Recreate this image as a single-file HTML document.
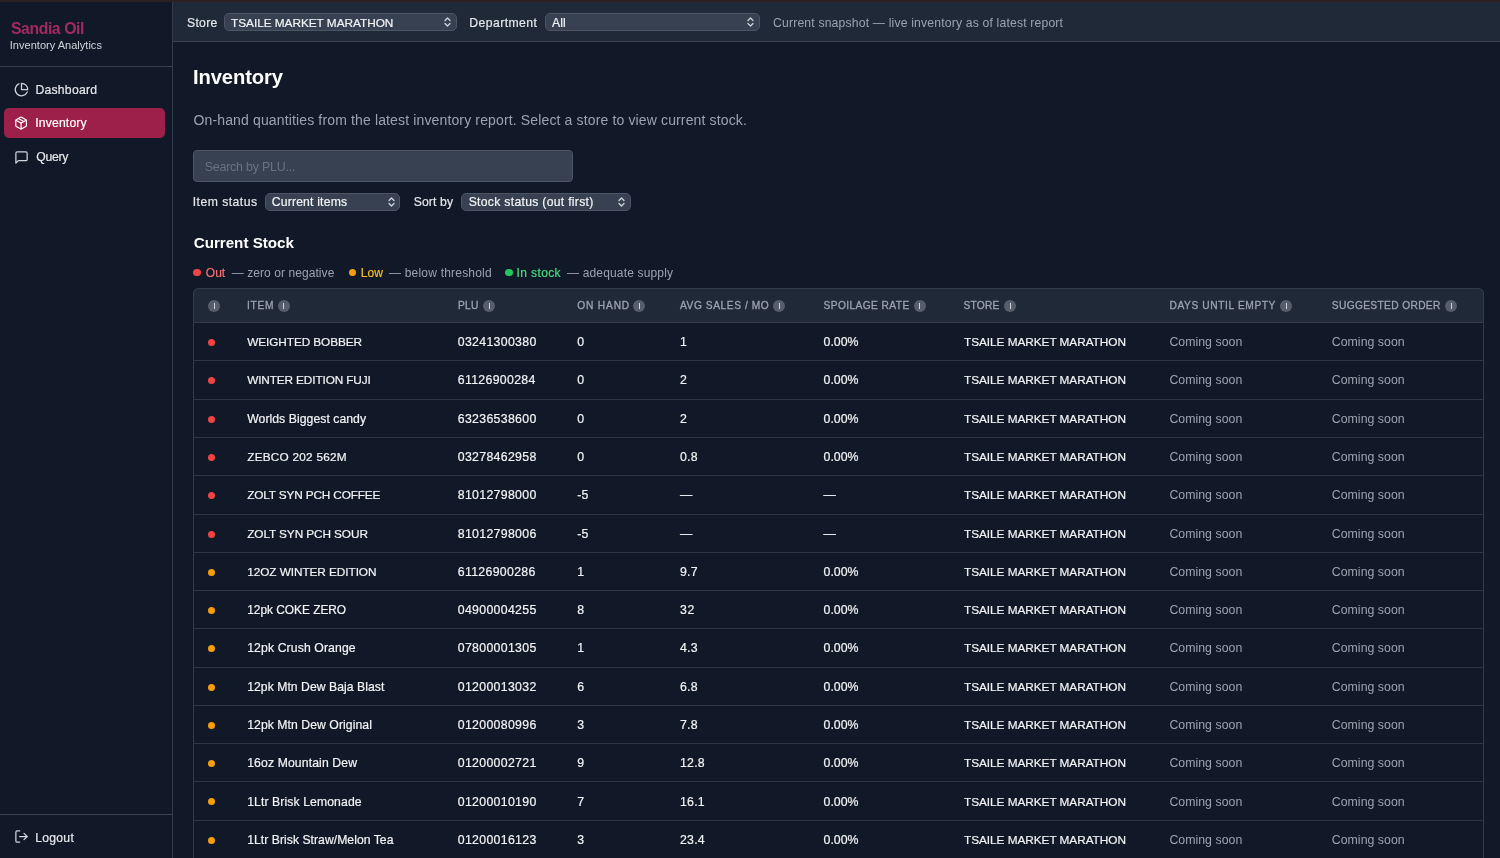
<!DOCTYPE html>
<html><head><meta charset="utf-8">
<style>
*{box-sizing:border-box;margin:0;padding:0}
html,body{width:1500px;height:858px;overflow:hidden;background:#111827;font-family:"Liberation Sans",sans-serif;color:#f3f4f6}
#wrap{position:absolute;left:0;top:0;width:1500px;height:858px;will-change:transform;background:#111827}
.a{position:absolute;line-height:1;white-space:nowrap}
#strip{position:absolute;left:0;top:0;width:1500px;height:2px;background:#2b2124}
#side{position:absolute;left:0;top:2px;width:173px;height:856px;background:#111827;border-right:1px solid #333c4a}
#brandline{position:absolute;left:0;top:64px;width:172px;height:1px;background:#374151}
.navbg{position:absolute;left:4px;top:105.5px;width:161px;height:30.5px;border-radius:5px;background:#9c2049}
.ico{position:absolute;width:15px;height:15px}
#logoutline{position:absolute;left:0;top:812px;width:172px;height:1px;background:#374151}
#top{position:absolute;left:173px;top:2px;width:1327px;height:40px;background:#1f2937;border-bottom:1px solid #374151}
.sel{position:absolute;height:18px;border:1px solid #4b5563;background:#374151;border-radius:5px}
.chev{position:absolute;width:7px;height:10px}
#search{position:absolute;left:193px;top:149.5px;width:380px;height:32.5px;background:#374151;border:1px solid #4b5563;border-radius:4px}
.tbl{position:absolute;left:193px;top:288px;width:1291px;height:600px;border:1px solid #323b49;border-radius:6px;overflow:hidden}
.thead{position:absolute;left:193px;top:288px;width:1291px;height:35px;background:#1f2937;border:1px solid #323b49;border-bottom:1px solid #343d4b;border-radius:6px 6px 0 0}
.info{position:absolute;width:12px;height:12px;border-radius:50%;background:#565e6b}
.info::after{content:"";position:absolute;left:5.5px;top:3px;width:1px;height:6px;background:#d1d5db}
.hr{position:absolute;left:194px;width:1289px;height:1px;background:#2b3544}
.dot{position:absolute;left:208px;width:7px;height:7px;border-radius:50%}
.ld{position:absolute;width:7.5px;height:7.5px;border-radius:50%;top:268.8px}
</style></head><body><div id="wrap">
<div id="strip"></div>
<div id="side">
  <div id="brandline"></div>
  <div class="navbg"></div>
  <div id="logoutline"></div>
</div>
<svg class="ico" style="left:14px;top:81.5px" viewBox="0 0 24 24" fill="none" stroke="#d1d5db" stroke-width="2" stroke-linecap="round" stroke-linejoin="round"><path d="M21.21 15.89A10 10 0 1 1 8 2.83"/><path d="M22 12A10 10 0 0 0 12 2v10z"/></svg>
<svg class="ico" style="left:14px;top:115.6px;width:14.2px;height:14.2px" viewBox="0 0 24 24" fill="none" stroke="#fff" stroke-width="2" stroke-linecap="round" stroke-linejoin="round"><path d="m7.5 4.27 9 5.15"/><path d="M21 8a2 2 0 0 0-1-1.73l-7-4a2 2 0 0 0-2 0l-7 4A2 2 0 0 0 3 8v8a2 2 0 0 0 1 1.73l7 4a2 2 0 0 0 2 0l7-4A2 2 0 0 0 21 16Z"/><path d="m3.3 7 8.7 5 8.7-5"/><path d="M12 22V12"/></svg>
<svg class="ico" style="left:14px;top:149.6px" viewBox="0 0 24 24" fill="none" stroke="#d1d5db" stroke-width="2" stroke-linecap="round" stroke-linejoin="round"><path d="M21 15a2 2 0 0 1-2 2H7l-4 4V5a2 2 0 0 1 2-2h14a2 2 0 0 1 2 2z"/></svg>
<svg class="ico" style="left:14px;top:829px" viewBox="0 0 24 24" fill="none" stroke="#d1d5db" stroke-width="2" stroke-linecap="round" stroke-linejoin="round"><path d="M9 21H5a2 2 0 0 1-2-2V5a2 2 0 0 1 2-2h4"/><polyline points="16 17 21 12 16 7"/><line x1="21" y1="12" x2="9" y2="12"/></svg>

<div id="top"></div>
<div class="sel" style="left:224.3px;top:13px;width:232.5px"></div>
<svg class="chev" style="left:444px;top:17px" viewBox="0 0 7 10" fill="none" stroke="#d1d5db" stroke-width="1.3" stroke-linecap="round" stroke-linejoin="round"><path d="M1 3.5 3.5 1 6 3.5M1 6.5 3.5 9 6 6.5"/></svg>
<div class="sel" style="left:545px;top:13px;width:214.5px"></div>
<svg class="chev" style="left:747px;top:17px" viewBox="0 0 7 10" fill="none" stroke="#d1d5db" stroke-width="1.3" stroke-linecap="round" stroke-linejoin="round"><path d="M1 3.5 3.5 1 6 3.5M1 6.5 3.5 9 6 6.5"/></svg>

<div id="search"></div>
<div class="sel" style="left:265px;top:193px;width:135px"></div>
<svg class="chev" style="left:387.5px;top:197px" viewBox="0 0 7 10" fill="none" stroke="#d1d5db" stroke-width="1.3" stroke-linecap="round" stroke-linejoin="round"><path d="M1 3.5 3.5 1 6 3.5M1 6.5 3.5 9 6 6.5"/></svg>
<div class="sel" style="left:461.3px;top:193px;width:169.5px"></div>
<svg class="chev" style="left:617.5px;top:197px" viewBox="0 0 7 10" fill="none" stroke="#d1d5db" stroke-width="1.3" stroke-linecap="round" stroke-linejoin="round"><path d="M1 3.5 3.5 1 6 3.5M1 6.5 3.5 9 6 6.5"/></svg>
<div class="ld" style="left:193px;background:#ef4444"></div>
<div class="ld" style="left:348.5px;background:#f59e0b"></div>
<div class="ld" style="left:505px;background:#22c55e"></div>

<div class="tbl"></div>
<div class="thead"></div>
<div class="info" style="left:208px;top:299.7px"></div>
<div class="a" style="left:247.00px;top:301.00px;font-size:10.2px;color:#9ca3af;letter-spacing:0.717px;-webkit-text-stroke:0.3px #9ca3af">ITEM</div>
<div class="info" style="left:277.7px;top:299.7px"></div>
<div class="a" style="left:458.00px;top:301.00px;font-size:10.2px;color:#9ca3af;letter-spacing:0.270px;-webkit-text-stroke:0.3px #9ca3af">PLU</div>
<div class="info" style="left:483px;top:299.7px"></div>
<div class="a" style="left:577.30px;top:301.00px;font-size:10.2px;color:#9ca3af;letter-spacing:0.813px;-webkit-text-stroke:0.3px #9ca3af">ON HAND</div>
<div class="info" style="left:633.3px;top:299.7px"></div>
<div class="a" style="left:680.00px;top:301.00px;font-size:10.2px;color:#9ca3af;letter-spacing:0.568px;-webkit-text-stroke:0.3px #9ca3af">AVG SALES / MO</div>
<div class="info" style="left:773.3px;top:299.7px"></div>
<div class="a" style="left:823.50px;top:301.00px;font-size:10.2px;color:#9ca3af;letter-spacing:0.411px;-webkit-text-stroke:0.3px #9ca3af">SPOILAGE RATE</div>
<div class="info" style="left:913.9px;top:299.7px"></div>
<div class="a" style="left:963.50px;top:301.00px;font-size:10.2px;color:#9ca3af;letter-spacing:0.221px;-webkit-text-stroke:0.3px #9ca3af">STORE</div>
<div class="info" style="left:1004px;top:299.7px"></div>
<div class="a" style="left:1169.50px;top:301.00px;font-size:10.2px;color:#9ca3af;letter-spacing:0.608px;-webkit-text-stroke:0.3px #9ca3af">DAYS UNTIL EMPTY</div>
<div class="info" style="left:1280.3px;top:299.7px"></div>
<div class="a" style="left:1331.80px;top:301.00px;font-size:10.2px;color:#9ca3af;letter-spacing:0.355px;-webkit-text-stroke:0.3px #9ca3af">SUGGESTED ORDER</div>
<div class="info" style="left:1445px;top:299.7px"></div>
<div class="dot" style="top:339.10px;background:#ef4444"></div>
<div class="a" style="left:247.20px;top:337.00px;font-size:11.8px;color:#f3f4f6;letter-spacing:-0.080px;-webkit-text-stroke:0.2px #f3f4f6">WEIGHTED BOBBER</div>
<div class="a" style="left:457.80px;top:336.00px;font-size:12.3px;color:#f3f4f6;letter-spacing:0.319px;-webkit-text-stroke:0.2px #f3f4f6">03241300380</div>
<div class="a" style="left:577.20px;top:336.00px;font-size:12.3px;color:#f3f4f6;-webkit-text-stroke:0.2px #f3f4f6">0</div>
<div class="a" style="left:680.00px;top:336.00px;font-size:12.3px;color:#f3f4f6;-webkit-text-stroke:0.2px #f3f4f6">1</div>
<div class="a" style="left:823.60px;top:336.00px;font-size:12.3px;color:#f3f4f6;letter-spacing:-0.014px;-webkit-text-stroke:0.2px #f3f4f6">0.00%</div>
<div class="a" style="left:964.00px;top:337.00px;font-size:11.8px;color:#f3f4f6;letter-spacing:-0.041px;-webkit-text-stroke:0.2px #f3f4f6">TSAILE MARKET MARATHON</div>
<div class="a" style="left:1169.40px;top:336.00px;font-size:12.3px;color:#9ca3af;letter-spacing:0.038px;">Coming soon</div>
<div class="a" style="left:1331.80px;top:336.00px;font-size:12.3px;color:#9ca3af;letter-spacing:0.038px;">Coming soon</div>
<div class="hr" style="top:360px"></div>
<div class="dot" style="top:377.38px;background:#ef4444"></div>
<div class="a" style="left:247.20px;top:375.00px;font-size:11.8px;color:#f3f4f6;letter-spacing:-0.126px;-webkit-text-stroke:0.2px #f3f4f6">WINTER EDITION FUJI</div>
<div class="a" style="left:457.80px;top:374.00px;font-size:12.3px;color:#f3f4f6;letter-spacing:0.322px;-webkit-text-stroke:0.2px #f3f4f6">61126900284</div>
<div class="a" style="left:577.20px;top:374.00px;font-size:12.3px;color:#f3f4f6;-webkit-text-stroke:0.2px #f3f4f6">0</div>
<div class="a" style="left:680.00px;top:374.00px;font-size:12.3px;color:#f3f4f6;-webkit-text-stroke:0.2px #f3f4f6">2</div>
<div class="a" style="left:823.60px;top:374.00px;font-size:12.3px;color:#f3f4f6;letter-spacing:-0.014px;-webkit-text-stroke:0.2px #f3f4f6">0.00%</div>
<div class="a" style="left:964.00px;top:375.00px;font-size:11.8px;color:#f3f4f6;letter-spacing:-0.041px;-webkit-text-stroke:0.2px #f3f4f6">TSAILE MARKET MARATHON</div>
<div class="a" style="left:1169.40px;top:374.00px;font-size:12.3px;color:#9ca3af;letter-spacing:0.038px;">Coming soon</div>
<div class="a" style="left:1331.80px;top:374.00px;font-size:12.3px;color:#9ca3af;letter-spacing:0.038px;">Coming soon</div>
<div class="hr" style="top:399px"></div>
<div class="dot" style="top:415.66px;background:#ef4444"></div>
<div class="a" style="left:247.20px;top:413.00px;font-size:12.24px;color:#f3f4f6;letter-spacing:0.042px;-webkit-text-stroke:0.2px #f3f4f6">Worlds Biggest candy</div>
<div class="a" style="left:457.80px;top:413.00px;font-size:12.3px;color:#f3f4f6;letter-spacing:0.319px;-webkit-text-stroke:0.2px #f3f4f6">63236538600</div>
<div class="a" style="left:577.20px;top:413.00px;font-size:12.3px;color:#f3f4f6;-webkit-text-stroke:0.2px #f3f4f6">0</div>
<div class="a" style="left:680.00px;top:413.00px;font-size:12.3px;color:#f3f4f6;-webkit-text-stroke:0.2px #f3f4f6">2</div>
<div class="a" style="left:823.60px;top:413.00px;font-size:12.3px;color:#f3f4f6;letter-spacing:-0.014px;-webkit-text-stroke:0.2px #f3f4f6">0.00%</div>
<div class="a" style="left:964.00px;top:414.00px;font-size:11.8px;color:#f3f4f6;letter-spacing:-0.041px;-webkit-text-stroke:0.2px #f3f4f6">TSAILE MARKET MARATHON</div>
<div class="a" style="left:1169.40px;top:413.00px;font-size:12.3px;color:#9ca3af;letter-spacing:0.038px;">Coming soon</div>
<div class="a" style="left:1331.80px;top:413.00px;font-size:12.3px;color:#9ca3af;letter-spacing:0.038px;">Coming soon</div>
<div class="hr" style="top:437px"></div>
<div class="dot" style="top:453.94px;background:#ef4444"></div>
<div class="a" style="left:247.20px;top:452.00px;font-size:11.8px;color:#f3f4f6;letter-spacing:0.235px;-webkit-text-stroke:0.2px #f3f4f6">ZEBCO 202 562M</div>
<div class="a" style="left:457.80px;top:451.00px;font-size:12.3px;color:#f3f4f6;letter-spacing:0.319px;-webkit-text-stroke:0.2px #f3f4f6">03278462958</div>
<div class="a" style="left:577.20px;top:451.00px;font-size:12.3px;color:#f3f4f6;-webkit-text-stroke:0.2px #f3f4f6">0</div>
<div class="a" style="left:680.00px;top:451.00px;font-size:12.3px;color:#f3f4f6;letter-spacing:0.222px;-webkit-text-stroke:0.2px #f3f4f6">0.8</div>
<div class="a" style="left:823.60px;top:451.00px;font-size:12.3px;color:#f3f4f6;letter-spacing:-0.014px;-webkit-text-stroke:0.2px #f3f4f6">0.00%</div>
<div class="a" style="left:964.00px;top:452.00px;font-size:11.8px;color:#f3f4f6;letter-spacing:-0.041px;-webkit-text-stroke:0.2px #f3f4f6">TSAILE MARKET MARATHON</div>
<div class="a" style="left:1169.40px;top:451.00px;font-size:12.3px;color:#9ca3af;letter-spacing:0.038px;">Coming soon</div>
<div class="a" style="left:1331.80px;top:451.00px;font-size:12.3px;color:#9ca3af;letter-spacing:0.038px;">Coming soon</div>
<div class="hr" style="top:475px"></div>
<div class="dot" style="top:492.22px;background:#ef4444"></div>
<div class="a" style="left:247.20px;top:490.00px;font-size:11.8px;color:#f3f4f6;letter-spacing:-0.146px;-webkit-text-stroke:0.2px #f3f4f6">ZOLT SYN PCH COFFEE</div>
<div class="a" style="left:457.80px;top:489.00px;font-size:12.3px;color:#f3f4f6;letter-spacing:0.319px;-webkit-text-stroke:0.2px #f3f4f6">81012798000</div>
<div class="a" style="left:577.20px;top:489.00px;font-size:12.3px;color:#f3f4f6;letter-spacing:0.114px;-webkit-text-stroke:0.2px #f3f4f6">-5</div>
<div class="a" style="left:680.00px;top:489.00px;font-size:12.3px;color:#f3f4f6;-webkit-text-stroke:0.2px #f3f4f6">—</div>
<div class="a" style="left:823.60px;top:489.00px;font-size:12.3px;color:#f3f4f6;-webkit-text-stroke:0.2px #f3f4f6">—</div>
<div class="a" style="left:964.00px;top:490.00px;font-size:11.8px;color:#f3f4f6;letter-spacing:-0.041px;-webkit-text-stroke:0.2px #f3f4f6">TSAILE MARKET MARATHON</div>
<div class="a" style="left:1169.40px;top:489.00px;font-size:12.3px;color:#9ca3af;letter-spacing:0.038px;">Coming soon</div>
<div class="a" style="left:1331.80px;top:489.00px;font-size:12.3px;color:#9ca3af;letter-spacing:0.038px;">Coming soon</div>
<div class="hr" style="top:514px"></div>
<div class="dot" style="top:530.50px;background:#ef4444"></div>
<div class="a" style="left:247.20px;top:529.00px;font-size:11.8px;color:#f3f4f6;letter-spacing:-0.089px;-webkit-text-stroke:0.2px #f3f4f6">ZOLT SYN PCH SOUR</div>
<div class="a" style="left:457.80px;top:528.00px;font-size:12.3px;color:#f3f4f6;letter-spacing:0.319px;-webkit-text-stroke:0.2px #f3f4f6">81012798006</div>
<div class="a" style="left:577.20px;top:528.00px;font-size:12.3px;color:#f3f4f6;letter-spacing:0.114px;-webkit-text-stroke:0.2px #f3f4f6">-5</div>
<div class="a" style="left:680.00px;top:528.00px;font-size:12.3px;color:#f3f4f6;-webkit-text-stroke:0.2px #f3f4f6">—</div>
<div class="a" style="left:823.60px;top:528.00px;font-size:12.3px;color:#f3f4f6;-webkit-text-stroke:0.2px #f3f4f6">—</div>
<div class="a" style="left:964.00px;top:529.00px;font-size:11.8px;color:#f3f4f6;letter-spacing:-0.041px;-webkit-text-stroke:0.2px #f3f4f6">TSAILE MARKET MARATHON</div>
<div class="a" style="left:1169.40px;top:528.00px;font-size:12.3px;color:#9ca3af;letter-spacing:0.038px;">Coming soon</div>
<div class="a" style="left:1331.80px;top:528.00px;font-size:12.3px;color:#9ca3af;letter-spacing:0.038px;">Coming soon</div>
<div class="hr" style="top:552px"></div>
<div class="dot" style="top:568.78px;background:#f59e0b"></div>
<div class="a" style="left:247.20px;top:567.00px;font-size:11.8px;color:#f3f4f6;letter-spacing:-0.062px;-webkit-text-stroke:0.2px #f3f4f6">12OZ WINTER EDITION</div>
<div class="a" style="left:457.80px;top:566.00px;font-size:12.3px;color:#f3f4f6;letter-spacing:0.322px;-webkit-text-stroke:0.2px #f3f4f6">61126900286</div>
<div class="a" style="left:577.20px;top:566.00px;font-size:12.3px;color:#f3f4f6;-webkit-text-stroke:0.2px #f3f4f6">1</div>
<div class="a" style="left:680.00px;top:566.00px;font-size:12.3px;color:#f3f4f6;letter-spacing:0.222px;-webkit-text-stroke:0.2px #f3f4f6">9.7</div>
<div class="a" style="left:823.60px;top:566.00px;font-size:12.3px;color:#f3f4f6;letter-spacing:-0.014px;-webkit-text-stroke:0.2px #f3f4f6">0.00%</div>
<div class="a" style="left:964.00px;top:567.00px;font-size:11.8px;color:#f3f4f6;letter-spacing:-0.041px;-webkit-text-stroke:0.2px #f3f4f6">TSAILE MARKET MARATHON</div>
<div class="a" style="left:1169.40px;top:566.00px;font-size:12.3px;color:#9ca3af;letter-spacing:0.038px;">Coming soon</div>
<div class="a" style="left:1331.80px;top:566.00px;font-size:12.3px;color:#9ca3af;letter-spacing:0.038px;">Coming soon</div>
<div class="hr" style="top:590px"></div>
<div class="dot" style="top:607.06px;background:#f59e0b"></div>
<div class="a" style="left:247.20px;top:605.00px;font-size:11.9px;color:#f3f4f6;letter-spacing:-0.015px;-webkit-text-stroke:0.2px #f3f4f6">12pk COKE ZERO</div>
<div class="a" style="left:457.80px;top:604.00px;font-size:12.3px;color:#f3f4f6;letter-spacing:0.319px;-webkit-text-stroke:0.2px #f3f4f6">04900004255</div>
<div class="a" style="left:577.20px;top:604.00px;font-size:12.3px;color:#f3f4f6;-webkit-text-stroke:0.2px #f3f4f6">8</div>
<div class="a" style="left:680.00px;top:604.00px;font-size:12.3px;color:#f3f4f6;letter-spacing:0.716px;-webkit-text-stroke:0.2px #f3f4f6">32</div>
<div class="a" style="left:823.60px;top:604.00px;font-size:12.3px;color:#f3f4f6;letter-spacing:-0.014px;-webkit-text-stroke:0.2px #f3f4f6">0.00%</div>
<div class="a" style="left:964.00px;top:605.00px;font-size:11.8px;color:#f3f4f6;letter-spacing:-0.041px;-webkit-text-stroke:0.2px #f3f4f6">TSAILE MARKET MARATHON</div>
<div class="a" style="left:1169.40px;top:604.00px;font-size:12.3px;color:#9ca3af;letter-spacing:0.038px;">Coming soon</div>
<div class="a" style="left:1331.80px;top:604.00px;font-size:12.3px;color:#9ca3af;letter-spacing:0.038px;">Coming soon</div>
<div class="hr" style="top:628px"></div>
<div class="dot" style="top:645.34px;background:#f59e0b"></div>
<div class="a" style="left:247.20px;top:642.00px;font-size:12.22px;color:#f3f4f6;letter-spacing:0.112px;-webkit-text-stroke:0.2px #f3f4f6">12pk Crush Orange</div>
<div class="a" style="left:457.80px;top:642.00px;font-size:12.3px;color:#f3f4f6;letter-spacing:0.319px;-webkit-text-stroke:0.2px #f3f4f6">07800001305</div>
<div class="a" style="left:577.20px;top:642.00px;font-size:12.3px;color:#f3f4f6;-webkit-text-stroke:0.2px #f3f4f6">1</div>
<div class="a" style="left:680.00px;top:642.00px;font-size:12.3px;color:#f3f4f6;letter-spacing:0.222px;-webkit-text-stroke:0.2px #f3f4f6">4.3</div>
<div class="a" style="left:823.60px;top:642.00px;font-size:12.3px;color:#f3f4f6;letter-spacing:-0.014px;-webkit-text-stroke:0.2px #f3f4f6">0.00%</div>
<div class="a" style="left:964.00px;top:643.00px;font-size:11.8px;color:#f3f4f6;letter-spacing:-0.041px;-webkit-text-stroke:0.2px #f3f4f6">TSAILE MARKET MARATHON</div>
<div class="a" style="left:1169.40px;top:642.00px;font-size:12.3px;color:#9ca3af;letter-spacing:0.038px;">Coming soon</div>
<div class="a" style="left:1331.80px;top:642.00px;font-size:12.3px;color:#9ca3af;letter-spacing:0.038px;">Coming soon</div>
<div class="hr" style="top:667px"></div>
<div class="dot" style="top:683.62px;background:#f59e0b"></div>
<div class="a" style="left:247.20px;top:681.00px;font-size:12.18px;color:#f3f4f6;letter-spacing:0.050px;-webkit-text-stroke:0.2px #f3f4f6">12pk Mtn Dew Baja Blast</div>
<div class="a" style="left:457.80px;top:681.00px;font-size:12.3px;color:#f3f4f6;letter-spacing:0.319px;-webkit-text-stroke:0.2px #f3f4f6">01200013032</div>
<div class="a" style="left:577.20px;top:681.00px;font-size:12.3px;color:#f3f4f6;-webkit-text-stroke:0.2px #f3f4f6">6</div>
<div class="a" style="left:680.00px;top:681.00px;font-size:12.3px;color:#f3f4f6;letter-spacing:0.222px;-webkit-text-stroke:0.2px #f3f4f6">6.8</div>
<div class="a" style="left:823.60px;top:681.00px;font-size:12.3px;color:#f3f4f6;letter-spacing:-0.014px;-webkit-text-stroke:0.2px #f3f4f6">0.00%</div>
<div class="a" style="left:964.00px;top:682.00px;font-size:11.8px;color:#f3f4f6;letter-spacing:-0.041px;-webkit-text-stroke:0.2px #f3f4f6">TSAILE MARKET MARATHON</div>
<div class="a" style="left:1169.40px;top:681.00px;font-size:12.3px;color:#9ca3af;letter-spacing:0.038px;">Coming soon</div>
<div class="a" style="left:1331.80px;top:681.00px;font-size:12.3px;color:#9ca3af;letter-spacing:0.038px;">Coming soon</div>
<div class="hr" style="top:705px"></div>
<div class="dot" style="top:721.90px;background:#f59e0b"></div>
<div class="a" style="left:247.20px;top:719.00px;font-size:12.21px;color:#f3f4f6;letter-spacing:0.061px;-webkit-text-stroke:0.2px #f3f4f6">12pk Mtn Dew Original</div>
<div class="a" style="left:457.80px;top:719.00px;font-size:12.3px;color:#f3f4f6;letter-spacing:0.319px;-webkit-text-stroke:0.2px #f3f4f6">01200080996</div>
<div class="a" style="left:577.20px;top:719.00px;font-size:12.3px;color:#f3f4f6;-webkit-text-stroke:0.2px #f3f4f6">3</div>
<div class="a" style="left:680.00px;top:719.00px;font-size:12.3px;color:#f3f4f6;letter-spacing:0.222px;-webkit-text-stroke:0.2px #f3f4f6">7.8</div>
<div class="a" style="left:823.60px;top:719.00px;font-size:12.3px;color:#f3f4f6;letter-spacing:-0.014px;-webkit-text-stroke:0.2px #f3f4f6">0.00%</div>
<div class="a" style="left:964.00px;top:720.00px;font-size:11.8px;color:#f3f4f6;letter-spacing:-0.041px;-webkit-text-stroke:0.2px #f3f4f6">TSAILE MARKET MARATHON</div>
<div class="a" style="left:1169.40px;top:719.00px;font-size:12.3px;color:#9ca3af;letter-spacing:0.038px;">Coming soon</div>
<div class="a" style="left:1331.80px;top:719.00px;font-size:12.3px;color:#9ca3af;letter-spacing:0.038px;">Coming soon</div>
<div class="hr" style="top:743px"></div>
<div class="dot" style="top:760.18px;background:#f59e0b"></div>
<div class="a" style="left:247.20px;top:757.00px;font-size:12.22px;color:#f3f4f6;letter-spacing:0.113px;-webkit-text-stroke:0.2px #f3f4f6">16oz Mountain Dew</div>
<div class="a" style="left:457.80px;top:757.00px;font-size:12.3px;color:#f3f4f6;letter-spacing:0.319px;-webkit-text-stroke:0.2px #f3f4f6">01200002721</div>
<div class="a" style="left:577.20px;top:757.00px;font-size:12.3px;color:#f3f4f6;-webkit-text-stroke:0.2px #f3f4f6">9</div>
<div class="a" style="left:680.00px;top:757.00px;font-size:12.3px;color:#f3f4f6;letter-spacing:0.240px;-webkit-text-stroke:0.2px #f3f4f6">12.8</div>
<div class="a" style="left:823.60px;top:757.00px;font-size:12.3px;color:#f3f4f6;letter-spacing:-0.014px;-webkit-text-stroke:0.2px #f3f4f6">0.00%</div>
<div class="a" style="left:964.00px;top:758.00px;font-size:11.8px;color:#f3f4f6;letter-spacing:-0.041px;-webkit-text-stroke:0.2px #f3f4f6">TSAILE MARKET MARATHON</div>
<div class="a" style="left:1169.40px;top:757.00px;font-size:12.3px;color:#9ca3af;letter-spacing:0.038px;">Coming soon</div>
<div class="a" style="left:1331.80px;top:757.00px;font-size:12.3px;color:#9ca3af;letter-spacing:0.038px;">Coming soon</div>
<div class="hr" style="top:781px"></div>
<div class="dot" style="top:798.46px;background:#f59e0b"></div>
<div class="a" style="left:247.20px;top:796.00px;font-size:12.21px;color:#f3f4f6;letter-spacing:0.099px;-webkit-text-stroke:0.2px #f3f4f6">1Ltr Brisk Lemonade</div>
<div class="a" style="left:457.80px;top:796.00px;font-size:12.3px;color:#f3f4f6;letter-spacing:0.319px;-webkit-text-stroke:0.2px #f3f4f6">01200010190</div>
<div class="a" style="left:577.20px;top:796.00px;font-size:12.3px;color:#f3f4f6;-webkit-text-stroke:0.2px #f3f4f6">7</div>
<div class="a" style="left:680.00px;top:796.00px;font-size:12.3px;color:#f3f4f6;letter-spacing:0.240px;-webkit-text-stroke:0.2px #f3f4f6">16.1</div>
<div class="a" style="left:823.60px;top:796.00px;font-size:12.3px;color:#f3f4f6;letter-spacing:-0.014px;-webkit-text-stroke:0.2px #f3f4f6">0.00%</div>
<div class="a" style="left:964.00px;top:797.00px;font-size:11.8px;color:#f3f4f6;letter-spacing:-0.041px;-webkit-text-stroke:0.2px #f3f4f6">TSAILE MARKET MARATHON</div>
<div class="a" style="left:1169.40px;top:796.00px;font-size:12.3px;color:#9ca3af;letter-spacing:0.038px;">Coming soon</div>
<div class="a" style="left:1331.80px;top:796.00px;font-size:12.3px;color:#9ca3af;letter-spacing:0.038px;">Coming soon</div>
<div class="hr" style="top:820px"></div>
<div class="dot" style="top:836.74px;background:#f59e0b"></div>
<div class="a" style="left:247.20px;top:834.00px;font-size:12.18px;color:#f3f4f6;letter-spacing:0.042px;-webkit-text-stroke:0.2px #f3f4f6">1Ltr Brisk Straw/Melon Tea</div>
<div class="a" style="left:457.80px;top:834.00px;font-size:12.3px;color:#f3f4f6;letter-spacing:0.319px;-webkit-text-stroke:0.2px #f3f4f6">01200016123</div>
<div class="a" style="left:577.20px;top:834.00px;font-size:12.3px;color:#f3f4f6;-webkit-text-stroke:0.2px #f3f4f6">3</div>
<div class="a" style="left:680.00px;top:834.00px;font-size:12.3px;color:#f3f4f6;letter-spacing:0.240px;-webkit-text-stroke:0.2px #f3f4f6">23.4</div>
<div class="a" style="left:823.60px;top:834.00px;font-size:12.3px;color:#f3f4f6;letter-spacing:-0.014px;-webkit-text-stroke:0.2px #f3f4f6">0.00%</div>
<div class="a" style="left:964.00px;top:835.00px;font-size:11.8px;color:#f3f4f6;letter-spacing:-0.041px;-webkit-text-stroke:0.2px #f3f4f6">TSAILE MARKET MARATHON</div>
<div class="a" style="left:1169.40px;top:834.00px;font-size:12.3px;color:#9ca3af;letter-spacing:0.038px;">Coming soon</div>
<div class="a" style="left:1331.80px;top:834.00px;font-size:12.3px;color:#9ca3af;letter-spacing:0.038px;">Coming soon</div>
<div class="a" style="left:11.00px;top:21.00px;font-size:15.8px;color:#a32a60;font-weight:bold;letter-spacing:-0.429px;">Sandia Oil</div>
<div class="a" style="left:9.80px;top:40.00px;font-size:11px;color:#d1d5db;letter-spacing:0.021px;">Inventory Analytics</div>
<div class="a" style="left:35.40px;top:84.00px;font-size:12.2px;color:#e5e7eb;letter-spacing:0.257px;-webkit-text-stroke:0.2px #e5e7eb">Dashboard</div>
<div class="a" style="left:35.20px;top:117.00px;font-size:12.2px;color:#ffffff;letter-spacing:0.170px;-webkit-text-stroke:0.2px #fff">Inventory</div>
<div class="a" style="left:36.20px;top:151.00px;font-size:12.2px;color:#e5e7eb;letter-spacing:-0.249px;-webkit-text-stroke:0.2px #e5e7eb">Query</div>
<div class="a" style="left:35.20px;top:832.00px;font-size:12.2px;color:#e5e7eb;letter-spacing:0.262px;-webkit-text-stroke:0.2px #e5e7eb">Logout</div>
<div class="a" style="left:187.00px;top:17.00px;font-size:12.2px;color:#e5e7eb;letter-spacing:0.287px;-webkit-text-stroke:0.2px #e5e7eb">Store</div>
<div class="a" style="left:231.00px;top:18.00px;font-size:11.8px;color:#f3f4f6;letter-spacing:-0.022px;-webkit-text-stroke:0.2px #f3f4f6">TSAILE MARKET MARATHON</div>
<div class="a" style="left:469.30px;top:17.00px;font-size:12.2px;color:#e5e7eb;letter-spacing:0.435px;-webkit-text-stroke:0.2px #e5e7eb">Department</div>
<div class="a" style="left:552.00px;top:17.00px;font-size:12.2px;color:#f3f4f6;letter-spacing:0.082px;-webkit-text-stroke:0.2px #f3f4f6">All</div>
<div class="a" style="left:773.00px;top:17.00px;font-size:12.2px;color:#9ca3af;letter-spacing:0.170px;">Current snapshot — live inventory as of latest report</div>
<div class="a" style="left:193.10px;top:67.00px;font-size:20.2px;color:#ffffff;font-weight:bold;letter-spacing:-0.130px;">Inventory</div>
<div class="a" style="left:193.50px;top:113.00px;font-size:14px;color:#9ca3af;letter-spacing:0.141px;">On-hand quantities from the latest inventory report. Select a store to view current stock.</div>
<div class="a" style="left:204.70px;top:161.00px;font-size:12.4px;color:#6b7280;letter-spacing:-0.195px;">Search by PLU...</div>
<div class="a" style="left:192.70px;top:196.00px;font-size:12.2px;color:#e5e7eb;letter-spacing:0.479px;-webkit-text-stroke:0.2px #e5e7eb">Item status</div>
<div class="a" style="left:271.70px;top:196.00px;font-size:12.2px;color:#f3f4f6;letter-spacing:0.188px;-webkit-text-stroke:0.2px #f3f4f6">Current items</div>
<div class="a" style="left:413.70px;top:196.00px;font-size:12.2px;color:#e5e7eb;letter-spacing:0.131px;-webkit-text-stroke:0.2px #e5e7eb">Sort by</div>
<div class="a" style="left:468.70px;top:196.00px;font-size:12.2px;color:#f3f4f6;letter-spacing:0.296px;-webkit-text-stroke:0.2px #f3f4f6">Stock status (out first)</div>
<div class="a" style="left:193.70px;top:235.00px;font-size:15.2px;color:#ffffff;font-weight:bold;letter-spacing:-0.015px;">Current Stock</div>
<div class="a" style="left:205.80px;top:267.00px;font-size:12px;color:#f87171;-webkit-text-stroke:0.2px #f87171">Out</div>
<div class="a" style="left:231.70px;top:267.00px;font-size:12px;color:#9ca3af;letter-spacing:0.076px;">— zero or negative</div>
<div class="a" style="left:360.80px;top:267.00px;font-size:12px;color:#fbbf24;letter-spacing:0.076px;-webkit-text-stroke:0.2px #fbbf24">Low</div>
<div class="a" style="left:389.00px;top:267.00px;font-size:12px;color:#9ca3af;letter-spacing:0.205px;">— below threshold</div>
<div class="a" style="left:516.60px;top:267.00px;font-size:12px;color:#4ade80;letter-spacing:0.379px;-webkit-text-stroke:0.2px #4ade80">In stock</div>
<div class="a" style="left:567.00px;top:267.00px;font-size:12px;color:#9ca3af;letter-spacing:0.162px;">— adequate supply</div>
</div></body></html>
